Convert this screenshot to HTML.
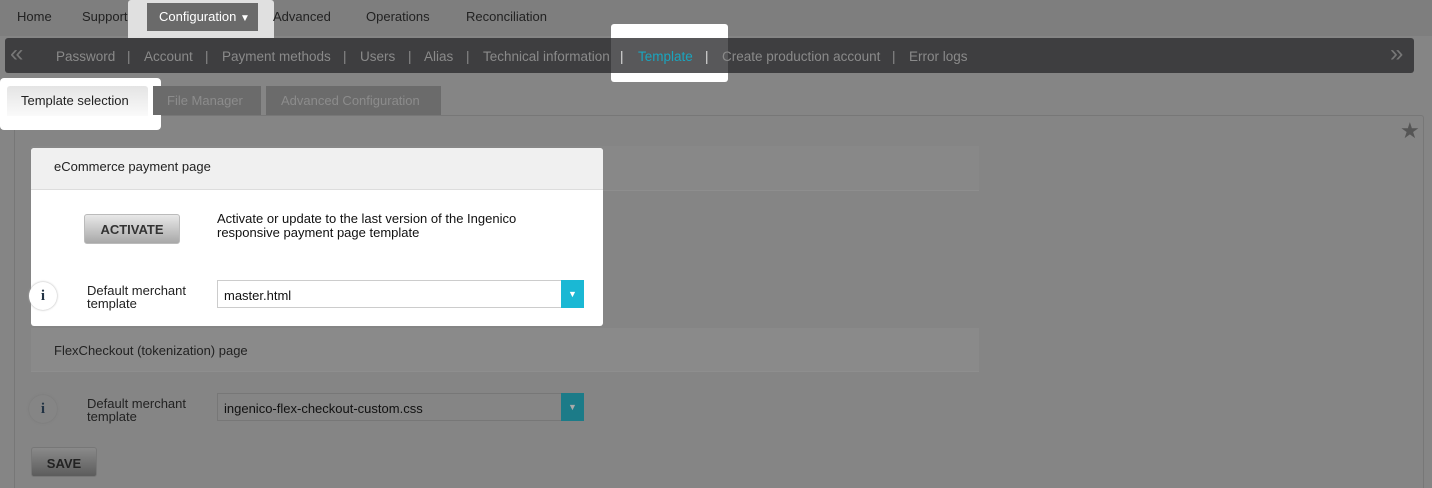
<!DOCTYPE html>
<html style="overflow:hidden"><head><meta charset="utf-8"><style>
*{margin:0;padding:0;box-sizing:border-box}
body{width:1432px;height:488px;background:#828282;font-family:"Liberation Sans",sans-serif;position:relative;overflow:hidden;font-size:13px}
.a{position:absolute;white-space:nowrap}
.s{position:absolute;top:49px;color:#8a8a8a;font-size:13.5px;white-space:nowrap}
</style></head><body>
<div class="a" style="left:0;top:0;width:1432px;height:36px;background:#7e7e7e"></div>
<div class="a" style="left:0;top:36px;width:1432px;height:452px;background:#858585"></div>
<div class="a" style="left:17px;top:9px;color:#222">Home</div>
<div class="a" style="left:82px;top:9px;color:#222">Support</div>
<div class="a" style="left:128px;top:0;width:146px;height:44px;background:#e0e0e0;border-radius:3px"></div>
<div class="a" style="left:147px;top:3px;width:111px;height:28px;background:#6a6a6a;color:#fff;padding:6px 0 0 12px">Configuration <span style="font-size:10px">▼</span></div>
<div class="a" style="left:273px;top:9px;color:#222">Advanced</div>
<div class="a" style="left:366px;top:9px;color:#222">Operations</div>
<div class="a" style="left:466px;top:9px;color:#222">Reconciliation</div>
<div class="a" style="left:5px;top:38px;width:1409px;height:35px;background:#3e3e40;border-radius:3px"></div>
<div class="a" style="left:611px;top:24px;width:117px;height:58px;background:#fff;border-radius:3px"></div>
<div class="a" style="left:611px;top:38px;width:117px;height:35px;background:#58585a"></div>
<div class="a" style="left:10px;top:40px;color:#777;font-size:24px">«</div>
<div class="a" style="left:1390px;top:40px;color:#777;font-size:24px">»</div>
<div class="s" style="left:56px">Password</div><div class="s" style="left:127px">|</div>
<div class="s" style="left:144px">Account</div><div class="s" style="left:205px">|</div>
<div class="s" style="left:222px">Payment methods</div><div class="s" style="left:343px">|</div>
<div class="s" style="left:360px">Users</div><div class="s" style="left:408px">|</div>
<div class="s" style="left:424px">Alias</div><div class="s" style="left:466px">|</div>
<div class="s" style="left:483px">Technical information</div>
<div class="s" style="left:620px;color:#ddd">|</div>
<div class="s" style="left:638px;color:#1aa5bf">Template</div>
<div class="s" style="left:705px;color:#ddd">|</div>
<div class="s" style="left:722px">Create production account</div><div class="s" style="left:892px">|</div>
<div class="s" style="left:909px">Error logs</div>
<div class="a" style="left:14px;top:115px;width:1410px;height:373px;border:1px solid #777;border-bottom:none;border-radius:3px 3px 0 0"></div>
<div class="a" style="left:0;top:78px;width:161px;height:52px;background:#fff;border-radius:4px"></div>
<div class="a" style="left:7px;top:86px;width:141px;height:30px;background:linear-gradient(#e4e4e4,#fafafa);border-radius:3px 3px 0 0;color:#222;padding:7px 0 0 14px">Template selection</div>
<div class="a" style="left:153px;top:86px;width:108px;height:29px;background:#6b6b6b;color:#8c8c8c;padding:7px 0 0 14px">File Manager</div>
<div class="a" style="left:266px;top:86px;width:175px;height:29px;background:#6b6b6b;color:#8c8c8c;padding:7px 0 0 15px">Advanced Configuration</div>
<div class="a" style="left:1400px;top:118px;color:#555;font-size:22px">★</div>
<div class="a" style="left:31px;top:146px;width:948px;height:44px;background:#888"></div>
<div class="a" style="left:31px;top:190px;width:948px;height:1px;background:#8e8e8e"></div>
<div class="a" style="left:31px;top:148px;width:572px;height:178px;background:#fff;border-radius:3px"></div>
<div class="a" style="left:31px;top:148px;width:572px;height:42px;background:#f0f0f0;border-bottom:1px solid #ddd;border-radius:3px 3px 0 0"></div>
<div class="a" style="left:54px;top:159px;color:#222">eCommerce payment page</div>
<div class="a" style="left:84px;top:214px;width:96px;height:30px;background:linear-gradient(#e8e8e8,#a8a8a8);border:1px solid #bbb;border-radius:3px;color:#333;font-weight:bold;text-align:center;padding-top:7px">ACTIVATE</div>
<div class="a" style="left:217px;top:212px;color:#111;line-height:14px">Activate or update to the last version of the Ingenico<br>responsive payment page template</div>
<div class="a" style="left:29px;top:282px;width:28px;height:28px;border-radius:50%;background:#fff;box-shadow:0 0 2px #aaa;color:#234;font-weight:bold;font-family:'Liberation Serif',serif;text-align:center;padding-top:6px;font-size:15px">i</div>
<div class="a" style="left:87px;top:284px;color:#222;line-height:13px">Default merchant<br>template</div>
<div class="a" style="left:217px;top:280px;width:367px;height:28px;border:1px solid #ccc;background:#fff;color:#111;padding:7px 0 0 6px">master.html</div>
<div class="a" style="left:561px;top:280px;width:23px;height:28px;background:#1ab8d4;color:#fff;font-size:9px;text-align:center;padding-top:9px">▼</div>
<div class="a" style="left:31px;top:328px;width:948px;height:44px;background:#8a8a8a;border-bottom:1px solid #8e8e8e"></div>
<div class="a" style="left:54px;top:343px;color:#222">FlexCheckout (tokenization) page</div>
<div class="a" style="left:29px;top:395px;width:28px;height:28px;border-radius:50%;background:#858585;box-shadow:0 0 2px #777;color:#234;font-weight:bold;font-family:'Liberation Serif',serif;text-align:center;padding-top:6px;font-size:15px">i</div>
<div class="a" style="left:87px;top:397px;color:#222;line-height:13px">Default merchant<br>template</div>
<div class="a" style="left:217px;top:393px;width:367px;height:28px;border:1px solid #777;background:#858585;color:#111;padding:7px 0 0 6px">ingenico-flex-checkout-custom.css</div>
<div class="a" style="left:561px;top:393px;width:23px;height:28px;background:#1c7b88;color:#aaa;font-size:9px;text-align:center;padding-top:9px">▼</div>
<div class="a" style="left:31px;top:447px;width:66px;height:30px;background:linear-gradient(#8a8a8a,#5c5c5c);border:1px solid #777;border-radius:3px;color:#222;font-weight:bold;text-align:center;padding-top:8px">SAVE</div>
</body></html>
